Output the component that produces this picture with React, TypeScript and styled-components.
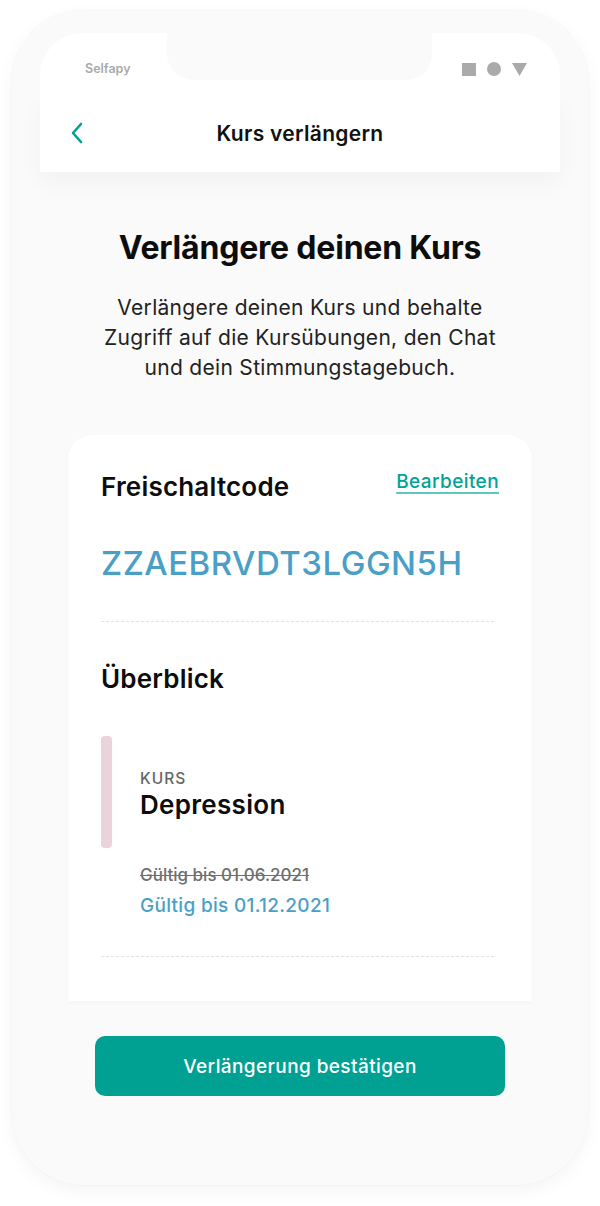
import styled, { createGlobalStyle } from "styled-components";

const GlobalStyle = createGlobalStyle`
  html, body {
    margin: 0;
    padding: 0;
    background: #ffffff;
  }
  body {
    font-family: Inter, "Liberation Sans", Arial, sans-serif;
    color: #111;
    -webkit-font-smoothing: antialiased;
  }
`;

const Page = styled.div`
  width: 600px;
  height: 1206px;
  padding: 10px 12px 21px;
  box-sizing: border-box;
`;

const Phone = styled.div`
  height: 100%;
  background: #fafafa;
  border-radius: 72px;
  box-shadow: 0 6px 18px rgba(0, 0, 0, 0.045), 0 0 0 1px rgba(0, 0, 0, 0.015);
  padding: 23px 28px 0;
  box-sizing: border-box;
`;

const Screen = styled.div`
  display: flex;
  flex-direction: column;
`;

const StatusBar = styled.div`
  position: relative;
  height: 62px;
  background: #fff;
  border-radius: 42px 42px 0 0;
  display: flex;
  justify-content: space-between;
  align-items: flex-start;
  padding: 28px 33px 0 45px;
  box-sizing: border-box;
`;

const Notch = styled.div`
  position: absolute;
  left: 127px;
  top: 0;
  width: 265px;
  height: 47px;
  background: #fafafa;
  border-radius: 0 0 26px 26px;
`;

const Carrier = styled.span`
  font-size: 12.5px;
  font-weight: 600;
  color: #aaa;
  line-height: 16px;
`;

const StatusIcons = styled.div`
  display: flex;
  gap: 11px;
  align-items: center;
  height: 14px;
  margin-top: 1px;
`;

const Header = styled.header`
  position: relative;
  z-index: 1;
  height: 77px;
  background: #fff;
  display: flex;
  align-items: center;
  justify-content: center;
  box-shadow: 0 10px 22px rgba(0, 0, 0, 0.035);
`;

const BackButton = styled.button`
  position: absolute;
  left: 30px;
  top: 27px;
  border: 0;
  background: none;
  padding: 0;
  display: flex;
  cursor: pointer;
`;

const HeaderTitle = styled.h1`
  margin: 0;
  font-size: 21px;
  font-weight: 600;
  letter-spacing: 0.3px;
  color: #111;
`;

const Body = styled.main`
  display: flex;
  flex-direction: column;
  align-items: center;
  padding-top: 56px;
`;

const Heading = styled.h2`
  margin: 0;
  font-size: 32px;
  line-height: 40px;
  font-weight: 700;
  letter-spacing: -0.2px;
  color: #0d0d0d;
`;

const Intro = styled.p`
  margin: 25px 0 0;
  width: 410px;
  text-align: center;
  font-size: 21px;
  line-height: 30px;
  color: #222;
  letter-spacing: 0.3px;
`;

const Card = styled.section`
  align-self: stretch;
  margin: 52px 28px 0;
  background: #fff;
  border-radius: 25px 25px 0 0;
  padding: 35px 34px 44px 33px;
  box-shadow: 0 2px 4px rgba(0, 0, 0, 0.02);
`;

const CardRow = styled.div`
  display: flex;
  justify-content: space-between;
  align-items: flex-start;
`;

const SectionTitle = styled.h3`
  margin: 0;
  font-size: 26px;
  line-height: 34px;
  font-weight: 600;
  letter-spacing: 0.2px;
  color: #0d0d0d;
`;

const EditLink = styled.a`
  font-size: 19px;
  line-height: 24px;
  font-weight: 500;
  color: #00a394;
  letter-spacing: 0.4px;
  text-decoration: underline;
  text-decoration-thickness: 2px;
  text-underline-offset: 4px;
  text-decoration-color: #5cc7bd;
  margin-right: -1px;
  cursor: pointer;
`;

const Code = styled.div`
  margin-top: 41px;
  font-size: 33px;
  line-height: 36px;
  font-weight: 500;
  letter-spacing: 0.5px;
  color: #4a9fc7;
`;

const Divider = styled.hr<{ $top: number }>`
  border: 0;
  border-top: 1px dashed #e3e3e3;
  margin: ${(p) => p.$top}px 4px 0 0;
`;

const Overview = styled(SectionTitle)`
  margin-top: 40px;
`;

const CourseRow = styled.div`
  display: flex;
  align-items: center;
  gap: 28px;
  margin-top: 40px;
`;

const ColorBar = styled.div<{ $color: string }>`
  width: 11px;
  height: 112px;
  border-radius: 4px;
  background: ${(p) => p.$color};
  box-shadow: 0 0 10px rgba(0, 0, 0, 0.02);
`;

const CourseText = styled.div`
  display: flex;
  flex-direction: column;
  margin-top: 6px;
`;

const CourseLabel = styled.span`
  font-size: 15.5px;
  line-height: 20px;
  font-weight: 500;
  letter-spacing: 1px;
  color: #666;
`;

const CourseName = styled.span`
  font-size: 26px;
  line-height: 32px;
  font-weight: 600;
  letter-spacing: 0.3px;
  color: #0d0d0d;
`;

const Validity = styled.div`
  display: flex;
  flex-direction: column;
  gap: 6px;
  margin: 15px 0 0 39px;
`;

const OldDate = styled.span`
  font-size: 17px;
  line-height: 24px;
  font-weight: 500;
  color: #6f6f6f;
  text-decoration: line-through;
`;

const NewDate = styled.span`
  font-size: 19px;
  line-height: 26px;
  font-weight: 500;
  letter-spacing: 0.3px;
  color: #4a9fc7;
`;

const ConfirmButton = styled.button`
  margin-top: 35px;
  width: 410px;
  height: 60px;
  border: 0;
  border-radius: 10px;
  background: #00a193;
  color: #fff;
  font-family: inherit;
  font-size: 19px;
  font-weight: 500;
  letter-spacing: 0.4px;
  cursor: pointer;
`;

function App() {
  return (
    <Page>
      <GlobalStyle />
      <Phone>
        <Screen>
          <StatusBar>
            <Notch />
            <Carrier>Selfapy</Carrier>
            <StatusIcons>
              <svg width="14" height="13" viewBox="0 0 14 13">
                <rect width="14" height="13" fill="#aaa" />
              </svg>
              <svg width="14" height="14" viewBox="0 0 14 14">
                <circle cx="7" cy="7" r="7" fill="#aaa" />
              </svg>
              <svg width="15" height="13" viewBox="0 0 15 13">
                <polygon points="0,0 15,0 7.5,13" fill="#aaa" />
              </svg>
            </StatusIcons>
          </StatusBar>
          <Header>
            <BackButton aria-label="Zurück">
              <svg width="14" height="22" viewBox="0 0 14 22">
                <polyline
                  points="11,2 3,11 11,20"
                  fill="none"
                  stroke="#00a193"
                  strokeWidth="2.6"
                  strokeLinecap="round"
                  strokeLinejoin="round"
                />
              </svg>
            </BackButton>
            <HeaderTitle>Kurs verlängern</HeaderTitle>
          </Header>
          <Body>
            <Heading>Verlängere deinen Kurs</Heading>
            <Intro>
              Verlängere deinen Kurs und behalte Zugriff auf die Kursübungen, den Chat und
              dein Stimmungstagebuch.
            </Intro>
            <Card>
              <CardRow>
                <SectionTitle>Freischaltcode</SectionTitle>
                <EditLink>Bearbeiten</EditLink>
              </CardRow>
              <Code>ZZAEBRVDT3LGGN5H</Code>
              <Divider $top={40} />
              <Overview>Überblick</Overview>
              <CourseRow>
                <ColorBar $color="#ead3da" />
                <CourseText>
                  <CourseLabel>KURS</CourseLabel>
                  <CourseName>Depression</CourseName>
                </CourseText>
              </CourseRow>
              <Validity>
                <OldDate>Gültig bis 01.06.2021</OldDate>
                <NewDate>Gültig bis 01.12.2021</NewDate>
              </Validity>
              <Divider $top={37} />
            </Card>
            <ConfirmButton>Verlängerung bestätigen</ConfirmButton>
          </Body>
        </Screen>
      </Phone>
    </Page>
  );
}

export default App;
